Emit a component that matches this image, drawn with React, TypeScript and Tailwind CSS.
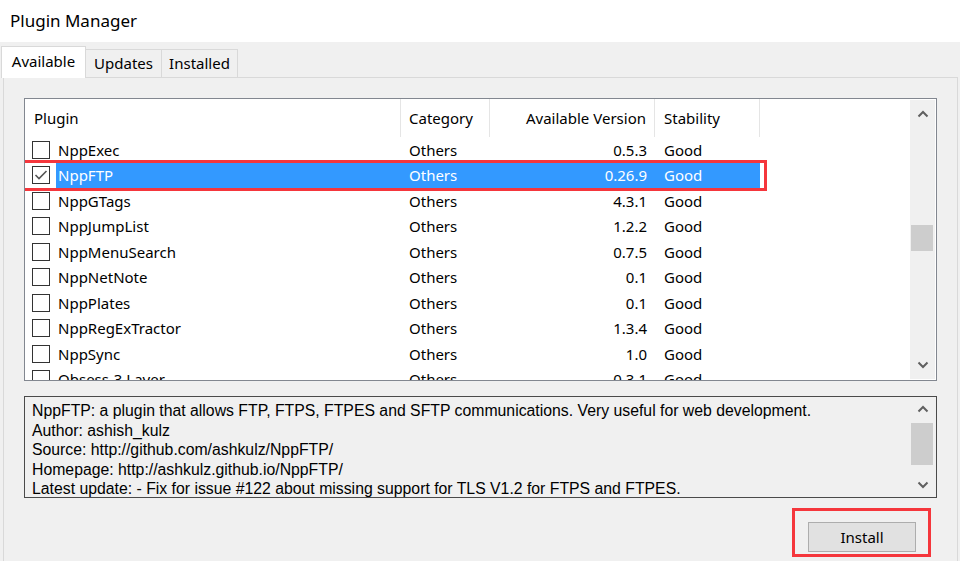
import React from "react";

const rows = [
  { name: "NppExec", cat: "Others", ver: "0.5.3", stab: "Good" },
  { name: "NppFTP", cat: "Others", ver: "0.26.9", stab: "Good", sel: true },
  { name: "NppGTags", cat: "Others", ver: "4.3.1", stab: "Good" },
  { name: "NppJumpList", cat: "Others", ver: "1.2.2", stab: "Good" },
  { name: "NppMenuSearch", cat: "Others", ver: "0.7.5", stab: "Good" },
  { name: "NppNetNote", cat: "Others", ver: "0.1", stab: "Good" },
  { name: "NppPlates", cat: "Others", ver: "0.1", stab: "Good" },
  { name: "NppRegExTractor", cat: "Others", ver: "1.3.4", stab: "Good" },
  { name: "NppSync", cat: "Others", ver: "1.0", stab: "Good" },
  { name: "Obsess-3 Layer", cat: "Others", ver: "0.3.1", stab: "Good" },
];

function Chevron({ dir }: { dir: "up" | "down" }) {
  return (
    <svg width="12" height="8" viewBox="0 0 12 8">
      {dir === "up" ? (
        <polyline points="1.5,6.5 6,2 10.5,6.5" fill="none" stroke="#606060" strokeWidth="2" />
      ) : (
        <polyline points="1.5,1.5 6,6 10.5,1.5" fill="none" stroke="#606060" strokeWidth="2" />
      )}
    </svg>
  );
}

function Checkbox({ checked }: { checked?: boolean }) {
  return (
    <div className="w-[18px] h-[18px] border border-[#333333] bg-white flex items-center justify-center shrink-0">
      {checked && (
        <svg width="14" height="12" viewBox="0 0 14 12">
          <polyline points="1.5,6 5,9.5 12.5,2" fill="none" stroke="#555555" strokeWidth="1.6" />
        </svg>
      )}
    </div>
  );
}

export default function App() {
  const font = { fontFamily: '"Noto Sans", "Segoe UI", sans-serif' };
  return (
    <div className="w-[960px] h-[561px] overflow-hidden bg-[#f0f0f0] text-black flex flex-col" style={font}>
      {/* Title */}
      <div className="h-[42px] bg-white flex items-center pl-[10px] text-[17px] leading-none pb-[2px]">
        Plugin Manager
      </div>
      {/* Tabs */}
      <div className="h-[35px] flex items-end pl-[1px] relative z-10">
        <div className="w-[85px] h-[32px] bg-white border border-b-0 border-[#d9d9d9] flex items-center justify-center text-[15px] -mb-[1px] pb-[3px]">
          Available
        </div>
        <div className="w-[76px] h-[28px] border border-b-0 border-l-0 border-[#d9d9d9] flex items-center justify-center text-[15px]">
          Updates
        </div>
        <div className="w-[76px] h-[28px] border border-b-0 border-l-0 border-[#d9d9d9] flex items-center justify-center text-[15px]">
          Installed
        </div>
      </div>
      {/* Panel */}
      <div className="ml-[3px] w-[955px] flex-1 border border-[#d9d9d9] border-b-0 px-[20px] pt-[20px] flex flex-col">
        {/* List */}
        <div className="h-[283px] border border-[#828790] bg-white flex relative">
          <div className="flex-1 flex flex-col overflow-hidden">
            {/* header */}
            <div className="h-[38px] flex text-[15px] shrink-0">
              <div className="w-[376px] border-r border-[#e5e5e5] pl-[9px] pt-[1px] flex items-center">Plugin</div>
              <div className="w-[89px] border-r border-[#e5e5e5] pl-[8px] pt-[1px] flex items-center">Category</div>
              <div className="w-[165px] border-r border-[#e5e5e5] pr-[8px] pt-[1px] flex items-center justify-end">Available Version</div>
              <div className="w-[105px] border-r border-[#e5e5e5] pl-[9px] pt-[1px] flex items-center">Stability</div>
            </div>
            {/* rows */}
            <div className="flex-1 overflow-hidden">
              {rows.map((r) => (
                <div key={r.name} className="h-[25.5px] flex text-[15px] relative">
                  <div className="w-[31px] flex items-center pl-[7px]">
                    <Checkbox checked={r.sel} />
                  </div>
                  <div
                    className={
                      r.sel
                        ? "flex bg-[#3399ff] text-white w-[704px] h-full"
                        : "flex w-[704px] h-full"
                    }
                  >
                    <div className="w-[345px] flex items-center pl-[2px]">{r.name}</div>
                    <div className="w-[89px] flex items-center pl-[8px]">{r.cat}</div>
                    <div className="w-[165px] flex items-center justify-end pr-[8px]">{r.ver}</div>
                    <div className="w-[105px] flex items-center pl-[9px]">{r.stab}</div>
                  </div>
                  {r.sel && (
                    <div className="absolute left-[-5px] top-[-3px] w-[747px] h-[31px] border-[3px] border-[#f5363c] pointer-events-none" />
                  )}
                </div>
              ))}
            </div>
          </div>
          {/* scrollbar */}
          <div className="w-[25px] bg-[#f0f0f0] my-[1px] mr-[1px] flex flex-col items-center">
            <div className="h-[28px] flex items-center justify-center">
              <Chevron dir="up" />
            </div>
            <div className="flex-1 w-full relative">
              <div className="absolute left-[1px] right-[2px] top-[97px] h-[26px] bg-[#cdcdcd]" />
            </div>
            <div className="h-[28px] flex items-center justify-center">
              <Chevron dir="down" />
            </div>
          </div>
        </div>
        {/* Description */}
        <div className="mt-[15px] h-[102px] border border-[#4a4a4a] flex" style={{ fontFamily: '"Liberation Sans", Arial, sans-serif' }}>
          <div className="flex-1 pl-[7px] pt-[4px] text-[15.8px] leading-[19.5px]">
            <div>NppFTP: a plugin that allows FTP, FTPS, FTPES and SFTP communications. Very useful for web development.</div>
            <div>Author: ashish_kulz</div>
            <div>Source: http://github.com/ashkulz/NppFTP/</div>
            <div>Homepage: http://ashkulz.github.io/NppFTP/</div>
            <div>Latest update: - Fix for issue #122 about missing support for TLS V1.2 for FTPS and FTPES.</div>
          </div>
          <div className="w-[25px] my-[1px] mr-[1px] bg-[#f0f0f0] flex flex-col items-center">
            <div className="h-[22px] flex items-center justify-center">
              <Chevron dir="up" />
            </div>
            <div className="flex-1 w-full relative">
              <div className="absolute left-[1px] right-[2px] top-[3px] h-[42px] bg-[#cdcdcd]" />
            </div>
            <div className="h-[22px] flex items-center justify-center">
              <Chevron dir="down" />
            </div>
          </div>
        </div>
        {/* Install */}
        <div className="flex justify-end mt-[24px] pr-[21px]">
          <div className="relative">
            <button className="w-[108px] h-[30px] bg-[#e1e1e1] border border-[#adadad] text-[15px] flex items-center justify-center">
              Install
            </button>
            <div className="absolute left-[-16px] top-[-14px] w-[139px] h-[49px] border-[3px] border-[#f5363c] pointer-events-none" />
          </div>
        </div>
      </div>
    </div>
  );
}
